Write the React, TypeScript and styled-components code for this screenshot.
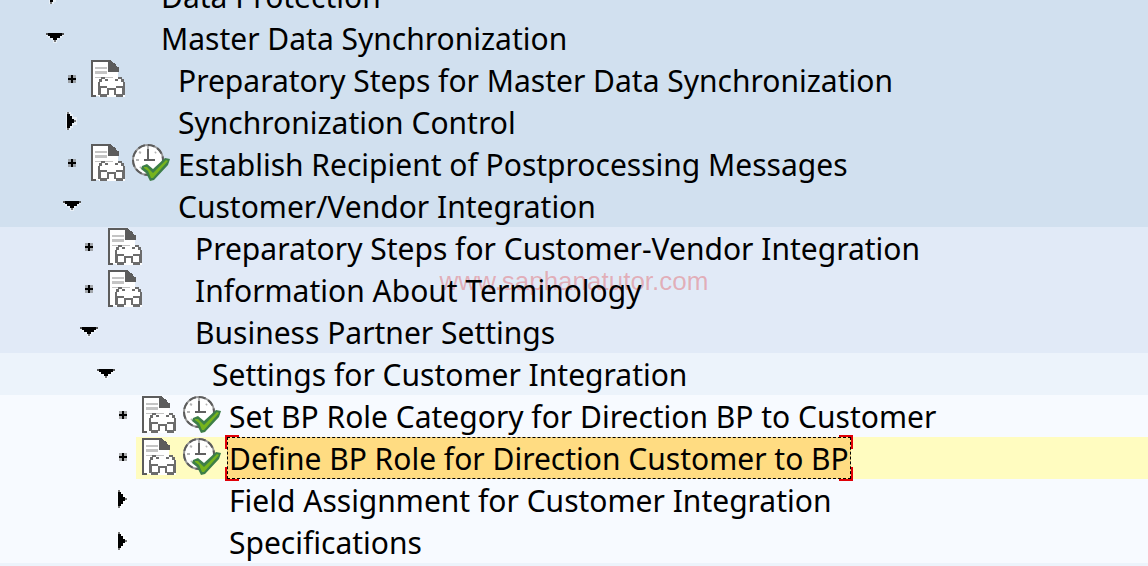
import React, { useState } from "react";
import styled, { createGlobalStyle } from "styled-components";

const GlobalStyle = createGlobalStyle`
  html, body, #root { height: 100%; }
  body {
    margin: 0;
    overflow: hidden;
    background: #f7faff;
    color: #000;
    font-family: Tahoma, "Noto Sans", sans-serif;
  }
  button {
    border: 0;
    padding: 0;
    background: none;
    color: inherit;
    font: inherit;
    cursor: pointer;
  }
`;

const Page = styled.main`
  position: relative;
  height: 100%;
  overflow: hidden;
`;

const Tree = styled.ul`
  list-style: none;
  margin: -25px 0 0;
  padding: 0;
`;

const Row = styled.li<{ $tone: string }>`
  display: flex;
  height: 42px;
  background: ${(p) => p.$tone};
`;

const Lead = styled.div<{ $level: number }>`
  display: flex;
  flex: none;
  align-items: center;
  justify-content: flex-end;
  box-sizing: border-box;
  width: ${(p) => 68 + p.$level * 17}px;
  padding: 0 4px 2px 0;
`;

const Toggle = styled.button`
  display: flex;
  align-items: center;
  justify-content: center;
  width: 18px;
  height: 18px;
`;

const Body = styled.div<{ $selected: boolean }>`
  display: flex;
  flex: 1;
  min-width: 0;
  background: ${(p) => (p.$selected ? "#fffcc0" : "transparent")};
`;

const Slots = styled.div`
  display: flex;
  flex: none;
  width: 91px;
  gap: 4px;
  padding-left: 5px;
  box-sizing: border-box;
`;

const IconButton = styled.button`
  display: block;
  width: 38px;
  height: 42px;
  svg { display: block; }
`;

const Label = styled.button<{ $selected: boolean }>`
  position: relative;
  z-index: 1;
  flex: none;
  box-sizing: border-box;
  height: 42px;
  padding: 0 2px;
  font-size: 30px;
  line-height: 44px;
  white-space: nowrap;
  text-align: left;
  background: ${(p) => (p.$selected ? "#ffdc82" : "transparent")};
  outline: none;
`;

const Dotted = styled.span`
  position: absolute;
  inset: 0;
  border: 1px dashed #000;
`;

const Corner = styled.span<{ $v: "top" | "bottom"; $h: "left" | "right" }>`
  position: absolute;
  z-index: -1;
  width: 14px;
  height: 14px;
  box-sizing: border-box;
  ${(p) => p.$v}: -2px;
  ${(p) => p.$h}: -2px;
  border: 0 solid #e00008;
  border-${(p) => p.$v}-width: 2px;
  border-${(p) => p.$h}-width: 2px;
`;

const Watermark = styled.p`
  position: absolute;
  inset: 0;
  display: flex;
  align-items: center;
  justify-content: center;
  margin: 0;
  padding-bottom: 4px;
  color: rgba(225, 60, 65, 0.35);
  font-family: "Liberation Sans", Arial, sans-serif;
  font-size: 26px;
  pointer-events: none;
`;

const OpenMark = () => (
  <svg width="18" height="12" viewBox="0 0 18 12" aria-hidden="true">
    <path d="M0 2h18v3h-2v2h-3v2h-2v3H7V9H5V7H2V5H0z" fill="#fff" opacity=".5" />
    <path d="M0 2h18v2h-2v1H2V4H0z" fill="#555" />
    <path d="M2 2h14v3h-2v2h-3v2H7V7H4V5H2z" fill="#000" />
    <path d="M8 9h2v2H8z" fill="#777" />
  </svg>
);

const ClosedMark = () => (
  <svg width="14" height="20" viewBox="0 0 14 20" aria-hidden="true">
    <path d="M1 1h5v2h2v3h4v8H8v3H6v2H1z" fill="#fff" opacity=".5" />
    <path d="M2 1h2v2H2zM2 17h2v2H2zM9 9h2v2H9z" fill="#777" />
    <path d="M2 3h3v2h2v3h2v4H7v3H5v2H2z" fill="#000" />
  </svg>
);

const LeafMark = () => (
  <svg width="10" height="10" viewBox="0 0 10 10" aria-hidden="true">
    <path d="M1 1h8v8H1z" fill="#777" opacity=".6" />
    <path d="M4 1h2v3h3v2H6v3H4V6H1V4h3z" fill="#000" />
  </svg>
);

const DocIcon = () => (
  <svg width="38" height="42" viewBox="0 0 38 42" shapeRendering="crispEdges" aria-hidden="true">
    <path d="M2 2h16l10 11v24H2z" fill="#fff" />
    <path d="M5 8h12v2H5zM5 12h12v3H5zM5 18h18v1H5z" fill="#c4c4c4" />
    <path d="M18 1h3l2 3h2l2 4h2v5H18z" fill="#5c5c5c" />
    <path d="M1 1h18v2H3v33h3v2H1z" fill="#5c5c5c" />
    <path d="M9 19h9l3 3 3-3h8l3 6v13H9l-2-3V25z" fill="#fff" />
    <path
      d="M11 18h4v2h-4zM9 20h3v3H9zM15 20h3v2h-3zM25 20h3v2h-3zM28 18h4v2h-4zM31 20h3v3h-3z"
      fill="#6c6c6c"
    />
    <path
      d="M8 23h2v4h7v2h9v-2h7v-4h2v13h-2v2h-7v-2h-2v-5h-5v5h-2v2h-7v-2H8zM11 29v6h6v-6zM26 29v6h6v-6z"
      fill="#6c6c6c"
      fillRule="evenodd"
    />
  </svg>
);

const ClockIcon = () => (
  <svg width="38" height="42" viewBox="0 0 38 42" aria-hidden="true">
    <circle cx="16" cy="17" r="15" fill="#fff" stroke="#999" strokeWidth="2" />
    <circle cx="16" cy="17" r="15" fill="none" stroke="#5c5c5c" strokeWidth="2" strokeDasharray="7 3" />
    <path d="M16 6v12M12 17h11" fill="none" stroke="#606060" strokeWidth="2" />
    <path d="M16 3v3M4 17h3M7 9l2 1M24 9l-1 1M8 25l1-1" stroke="#b4b4b4" strokeWidth="2" />
    <path d="M10 23l5-2 6 5L33 15l5 1-2 6-14 15-4 1-4-8-5-4z" fill="#3d7e48" />
    <path d="M12 24h3l6 6L34 17l2 1-15 17h-2l-3-7-4-3z" fill="#76b41d" />
  </svg>
);

type Kind = "open" | "closed" | "leaf";
interface TreeNode {
  text: string;
  level: number;
  kind: Kind;
  icons?: number;
  tone: string;
}

const tones = ["#d1e0ef", "#e1eaf7", "#ecf3fb", "#f7faff"];

const nodes: TreeNode[] = [
  { text: "Data Protection", level: 0, kind: "closed", tone: tones[0] },
  { text: "Master Data Synchronization", level: 0, kind: "open", tone: tones[0] },
  { text: "Preparatory Steps for Master Data Synchronization", level: 1, kind: "leaf", icons: 1, tone: tones[0] },
  { text: "Synchronization Control", level: 1, kind: "closed", tone: tones[0] },
  { text: "Establish Recipient of Postprocessing Messages", level: 1, kind: "leaf", icons: 2, tone: tones[0] },
  { text: "Customer/Vendor Integration", level: 1, kind: "open", tone: tones[0] },
  { text: "Preparatory Steps for Customer-Vendor Integration", level: 2, kind: "leaf", icons: 1, tone: tones[1] },
  { text: "Information About Terminology", level: 2, kind: "leaf", icons: 1, tone: tones[1] },
  { text: "Business Partner Settings", level: 2, kind: "open", tone: tones[1] },
  { text: "Settings for Customer Integration", level: 3, kind: "open", tone: tones[2] },
  { text: "Set BP Role Category for Direction BP to Customer", level: 4, kind: "leaf", icons: 2, tone: tones[3] },
  { text: "Define BP Role for Direction Customer to BP", level: 4, kind: "leaf", icons: 2, tone: tones[3] },
  { text: "Field Assignment for Customer Integration", level: 4, kind: "closed", tone: tones[3] },
  { text: "Specifications", level: 4, kind: "closed", tone: tones[3] },
];

const marks = { open: OpenMark, closed: ClosedMark, leaf: LeafMark };

export default function App() {
  const [selected, setSelected] = useState(11);
  return (
    <>
      <GlobalStyle />
      <Page>
        <Tree role="tree" aria-label="Customizing structure">
          {nodes.map((node, i) => {
            const Mark = marks[node.kind];
            const active = i === selected;
            return (
              <Row
                key={node.text}
                role="treeitem"
                aria-level={node.level + 1}
                aria-selected={active}
                aria-expanded={node.kind === "leaf" ? undefined : node.kind === "open"}
                $tone={node.tone}
              >
                <Lead $level={node.level}>
                  {node.kind === "leaf" ? (
                    <Toggle as="span"><Mark /></Toggle>
                  ) : (
                    <Toggle aria-label={`Toggle ${node.text}`}><Mark /></Toggle>
                  )}
                </Lead>
                <Body $selected={active}>
                  <Slots>
                    {node.icons && <IconButton aria-label="Documentation"><DocIcon /></IconButton>}
                    {node.icons === 2 && <IconButton aria-label="Execute"><ClockIcon /></IconButton>}
                  </Slots>
                  <Label $selected={active} onClick={() => setSelected(i)}>
                    {active && (
                      <>
                        <Corner $v="top" $h="left" />
                        <Corner $v="top" $h="right" />
                        <Corner $v="bottom" $h="left" />
                        <Corner $v="bottom" $h="right" />
                        <Dotted />
                      </>
                    )}
                    {node.text}
                  </Label>
                </Body>
              </Row>
            );
          })}
          <Row role="presentation" $tone={tones[2]} />
        </Tree>
        <Watermark>www.saphanatutor.com</Watermark>
      </Page>
    </>
  );
}
